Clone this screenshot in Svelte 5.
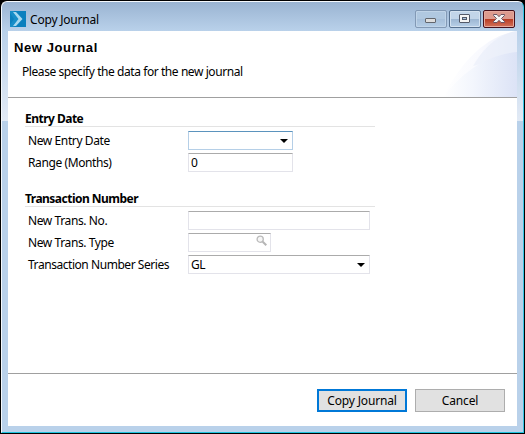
<script>
  let range = $state('0');
  let transNo = $state('');
</script>

<main class="window">
  <header class="titlebar">
    <svg class="logo" width="16" height="16" viewBox="0 0 16 16">
      <rect width="16" height="16" fill="#0b80be" />
      <path d="M0 0H4L10 8L4 16H0V14L4 8L0 2Z" fill="#168dc8" />
      <path d="M3 1H6L12.500 8L6 15H3L8.500 8Z" fill="#a6d8ef" />
    </svg>
    <span class="caption">Copy Journal</span>
    <div class="controls">
      <button class="ctl min" aria-label="Minimize">
        <svg width="30" height="16" viewBox="0 0 30 16"><rect x="9.5" y="7.5" width="10" height="4" rx=".5" fill="#ddd" stroke="#62666d" /></svg>
      </button>
      <button class="ctl" aria-label="Maximize">
        <svg width="30" height="16" viewBox="0 0 30 16"><rect x="9.5" y="3.5" width="10" height="8" rx=".5" fill="#f4f4f4" stroke="#535968" /><rect x="12.5" y="6.5" width="4" height="2" fill="#a9c4df" stroke="#535968" /></svg>
      </button>
      <button class="ctl close" aria-label="Close">
        <svg width="30" height="16" viewBox="0 0 30 16"><path d="M9.5 3.5H13L15 5.7L17 3.5H20.500L20.500 4.500L17.500 7.500L20.500 10.500V11.500H17L15 9.300L13 11.500H9.500V10.500L12.500 7.500L9.500 4.500Z" fill="#f5f5f5" stroke="#6c5563" /></svg>
      </button>
    </div>
  </header>

  <div class="client">
    <section class="banner">
      <svg class="swoosh" width="80" height="66" viewBox="0 0 80 66">
        <defs>
          <linearGradient id="a"><stop offset="0" stop-color="#fff" /><stop offset=".55" stop-color="#f8f9fe" /><stop offset="1" stop-color="#e8edf9" /></linearGradient>
          <linearGradient id="b"><stop offset="0" stop-color="#fff" /><stop offset=".4" stop-color="#f3f6fd" /><stop offset="1" stop-color="#dce3f6" /></linearGradient>
        </defs>
        <path d="M6 66C22 35 46 5 80 0V66Z" fill="url(#a)" />
        <path d="M36 35C46 18 59 4 80 0V24Z" fill="#e8edf9" opacity=".6" />
        <path d="M6 66C24 43 47 24 80 21V66Z" fill="url(#b)" />
      </svg>
      <h1>New Journal</h1>
      <p>Please specify the data for the new journal</p>
    </section>

    <section class="form">
      <h2>Entry Date</h2>
      <div class="row"><span>New Entry Date</span><div class="field short focus"><svg class="arrow" width="8" height="4" viewBox="0 0 8 4"><path d="M0 0H8L4 4Z" /></svg></div></div>
      <div class="row"><span>Range (Months)</span><div class="field short"><input bind:value={range} aria-label="Range" /></div></div>
      <h2 class="g2">Transaction Number</h2>
      <div class="row"><span>New Trans. No.</span><div class="field"><input bind:value={transNo} aria-label="Number" /></div></div>
      <div class="row"><span>New Trans. Type</span><div class="field tiny"><svg class="lens" width="12" height="12" viewBox="0 0 12 12"><circle cx="4.200" cy="4.200" r="3.100" fill="#f6f6f6" stroke="#bbb" stroke-width="1.300" /><path d="M6.700 6.700L10.300 10.300" stroke="#b5b5b5" stroke-width="2" /></svg></div></div>
      <div class="row"><span class="series">Transaction Number Series</span><div class="field">GL<svg class="arrow" width="8" height="4" viewBox="0 0 8 4"><path d="M0 0H8L4 4Z" /></svg></div></div>
    </section>

    <footer>
      <button class="btn primary">Copy Journal</button>
      <button class="btn">Cancel</button>
    </footer>
  </div>
</main>

<style>
  :global(body) { background: #000; overflow: hidden; }
  * { box-sizing: border-box; }
  .window {
    width: 523px; height: 432px; margin: 1px 0 0 1px; padding: 0 6px 6px;
    display: flow-root;
    font: 12px/16px "Noto Sans", sans-serif; color: #000;
    border: 1px solid #f5f9fd; border-right-color: #35c5e5; border-bottom-color: #1fc3de;
    border-radius: 6px 6px 0 0;
    background: linear-gradient(#9ab4d2, #b9d1ea 29px, #e2eaf5 119px, #b9d1ea 119px);
    white-space: nowrap;
  }
  .titlebar { height: 29px; display: flex; align-items: flex-start; padding: 9px 2px 0 2px; }
  .logo { flex: none; }
  .caption { margin: 1px 0 0 4px; letter-spacing: -.2px; }
  .controls { margin: -1px 0 0 auto; display: flex; gap: 2px; }
  .ctl { width: 32px; height: 18px; padding: 0; border: 1px solid #56708f; border-radius: 2px; background: linear-gradient(#c2d5e9 48%, #9cb6d2 50%, #b8d0e8); box-shadow: inset 0 0 0 1px #d4e2f0; }
  .ctl svg { display: block; }
  .min { border-color: #8299b5; background: linear-gradient(#b0c8e0 48%, #a5bed9 50%, #b4cde6); box-shadow: inset 0 0 0 1px #c0d4e8; }
  .close { border-color: #46101c; background: linear-gradient(#dd9a8e 48%, #b83a22 50%, #d3735c); box-shadow: inset 0 0 0 1px #e6a99e; }
  .client { height: 395px; background: #fff; display: flex; flex-direction: column; }
  .banner { height: 67px; border-bottom: 1px solid #a0a0a0; position: relative; padding: 9px 0 0 6px; flex: none; }
  .swoosh { position: absolute; right: 0; top: 0; }
  h1 { margin: 0; font: bold 13px/16px "Liberation Sans", sans-serif; letter-spacing: .6px; }
  p { margin: 8px 0 0 8px; letter-spacing: -.43px; }
  .form { height: 275px; padding: 12px 0 0 17px; flex: none; }
  h2 { margin: 0; width: 350px; height: 17px; font-size: 12px; line-height: 17px; border-bottom: 1px solid #e3e3e3; font-weight: 700; letter-spacing: -.52px; }
  h2.g2 { margin-top: 18px; }
  .row { display: flex; height: 19px; margin-top: 3px; padding-left: 3px; line-height: 19px; letter-spacing: -.4px; }
  h2 + .row { margin-top: 4px; }
  .row > span { width: 160px; flex: none; }
  .row > .series { letter-spacing: -.45px; }
  .field { width: 182px; height: 19px; border: 1px solid #e3e3ea; border-top-color: #ababab; display: flex; align-items: center; padding: 0 4px 0 2px; }
  .short { width: 105px; }
  .tiny { width: 83px; }
  .focus { border-color: #b5cfe7; border-top-color: #5b93bd; }
  input { width: 100%; height: 17px; border: 0; padding: 0; outline: 0; background: transparent; font: inherit; }
  .arrow { margin-left: auto; }
  .lens { margin: -3px -2px 0 auto; }
  footer { height: 53px; border-top: 1px solid #a0a0a0; display: flex; justify-content: flex-end; padding: 15px 12px 0 0; gap: 8px; }
  .btn { width: 90px; height: 23px; padding: 0; border: 1px solid #adadad; background: #e1e1e1; font: 12px/19px "Noto Sans", sans-serif; letter-spacing: -.15px; color: #000; }
  .primary { border: 2px solid #0078d7; }
</style>
